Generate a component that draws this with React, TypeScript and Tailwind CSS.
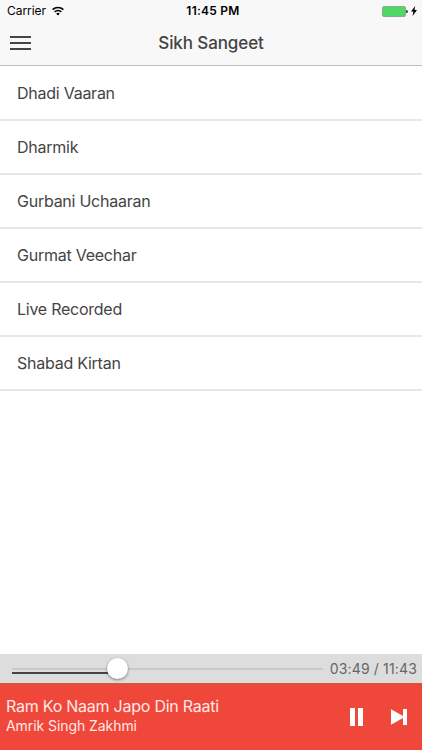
const categories = [
  "Dhadi Vaaran",
  "Dharmik",
  "Gurbani Uchaaran",
  "Gurmat Veechar",
  "Live Recorded",
  "Shabad Kirtan",
];

function StatusBar() {
  return (
    <div className="grid h-[22px] grid-cols-3 items-center pl-[7px] pr-[5px] text-black">
      <div className="flex items-center gap-[6px]">
        <span className="text-[12px] leading-4 tracking-[-0.05px]">Carrier</span>
        <svg width="12" height="10" viewBox="0 0 13 10" fill="none" stroke="currentColor" strokeWidth="1.8">
          <path d="M0.7 3.6a8.2 8.2 0 0 1 11.6 0" />
          <path d="M2.9 6a5.1 5.1 0 0 1 7.2 0" />
          <path d="M6.5 9.9 4.6 7.9a2.7 2.7 0 0 1 3.8 0z" fill="currentColor" stroke="none" />
        </svg>
      </div>
      <span className="pl-[2px] text-center text-[12px] font-semibold leading-4 tracking-[0.25px]">11:45 PM</span>
      <div className="flex items-center justify-end">
        <div className="h-[11px] w-6 rounded-[2px] border border-[#8fa892] bg-[#4cd964]" />
        <div className="h-[3px] w-[2px] rounded-r-full bg-[#444]" />
        <svg className="ml-[3px]" width="6" height="10" viewBox="0 0 6 10" fill="currentColor">
          <path d="M4.2 0 0 5.5h2.3L1.6 10 6 4.1H3.5z" />
        </svg>
      </div>
    </div>
  );
}

function Header() {
  return (
    <header className="h-[66px] border-b border-[#bfbfbf] bg-[#f8f8f8]">
      <StatusBar />
      <div className="grid h-[42px] grid-cols-[1fr_auto_1fr] items-center px-[10px]">
        <button className="flex w-[21px] flex-col gap-1" aria-label="Menu">
          <span className="h-0.5 w-full bg-[#444]" />
          <span className="h-0.5 w-full bg-[#444]" />
          <span className="h-0.5 w-full bg-[#444]" />
        </button>
        <h1 className="pt-[2px] text-[17px] font-medium tracking-[-0.1px] text-[#444]">Sikh Sangeet</h1>
      </div>
    </header>
  );
}

function Player() {
  return (
    <footer>
      <div className="flex h-[29px] items-center bg-[#dddddd] pl-3 pr-[5px] text-[#666]">
        <div className="relative h-[21px] w-[311px]">
          <div className="mt-[10px] h-0.5 bg-[#cacaca]" />
          <div className="mt-[2px] h-0.5 w-[106px] bg-[#444]" />
          <div className="absolute left-[95px] top-0 size-[21px] rounded-full bg-white shadow-[0_1px_3px_rgba(0,0,0,0.45)]" />
        </div>
        <span className="ml-auto whitespace-nowrap text-[14px] tracking-[0.15px]">03:49 / 11:43</span>
      </div>
      <div className="flex h-[67px] items-center border-t border-[#c95a4e] bg-[#ef473a] pl-[6px] pr-[15px] text-white">
        <div className="flex-1 pb-1 text-[#ffe9e7]">
          <div className="text-[16px] leading-[22px] tracking-[-0.24px]">Ram Ko Naam Japo Din Raati</div>
          <div className="text-[14px] leading-[18px] tracking-[-0.07px]">Amrik Singh Zakhmi</div>
        </div>
        <button aria-label="Pause">
          <svg width="13" height="18" viewBox="0 0 13 18" fill="currentColor">
            <path d="M0 0h5v18H0zM8 0h5v18H8z" />
          </svg>
        </button>
        <button className="ml-7" aria-label="Next">
          <svg width="16" height="16" viewBox="0 0 16 16" fill="currentColor">
            <path d="M0 0.3 12 7V0h4v16h-4V9L0 15.7z" />
          </svg>
        </button>
      </div>
    </footer>
  );
}

export default function App() {
  return (
    <div className="flex h-[750px] w-[422px] flex-col overflow-hidden bg-white font-['Inter',sans-serif]">
      <Header />
      <ul className="flex-1 pt-px">
        {categories.map((name) => (
          <li
            key={name}
            className="flex h-[54px] items-center border-b-2 border-[#e8e8e8] pl-[17px] text-[16px] tracking-[-0.25px] text-[#444]"
          >
            {name}
          </li>
        ))}
      </ul>
      <Player />
    </div>
  );
}
